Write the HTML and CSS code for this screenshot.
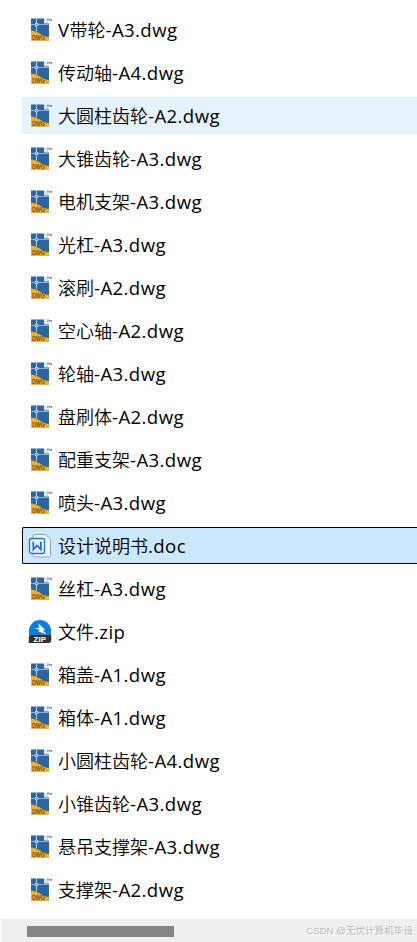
FILE: index.html
```
<!DOCTYPE html>
<html lang="zh-CN">
<head>
    <meta charset="UTF-8">
    <meta name="viewport" content="width=device-width, initial-scale=1.0">
    <title>文件列表</title>
    <link rel="stylesheet" href="styles.css">
</head>
<body>
    <!-- 图标定义 -->
    <svg class="icon-defs">
        <symbol id="icon-dwg" viewBox="0 0 24 24">
            <path fill="#2d65a3" d="M3 .5h13L21 5.500V23H3z"/>
            <path fill="#dfe8f4" d="M16 .5 21 5.500h-5z"/>
            <path fill="#f4b223" d="M3 12.500c4 .5 7 1.800 10 3.800 2.500 1.600 5 2.500 8 3V23H3z"/>
            <path fill="none" stroke="#b5cde6" d="M8.500.5V5M8.500 8v5.300"/>
            <path fill="none" stroke="#8fb0d3" d="M3 6.500h4M10 6.500h11"/>
            <circle cx="8.500" cy="6.500" r="1.500" fill="#4f83b9" stroke="#dcebfa"/>
            <text class="dwg-label" x="4" y="22" textLength="13" lengthAdjust="spacingAndGlyphs">DWG</text>
            <path fill="none" stroke="#5279ad" stroke-width=".8" d="M18.800 1h2.200M19.900 1v2M21.800 3V1l.9 1.200L23.600 1v2"/>
        </symbol>
        <symbol id="icon-doc" viewBox="0 0 24 24">
            <path fill="#f0f6ff" stroke="#8ea2c6" d="M6.500.5h11l5 4.500v16.500a1.500 1.500 0 0 1-1.500 1.500H6.500A1.500 1.500 0 0 1 5 21.500V2A1.500 1.500 0 0 1 6.500.5z"/>
            <rect x="1.500" y="4.500" width="15" height="15" rx="2" fill="#e8f3ff" stroke="#1a73ff" stroke-width="1.300"/>
            <path fill="none" stroke="#1a66ff" stroke-width="1.700" d="M4.300 8.500h1v7L9 11.500l3.800 4v-7h1"/>
        </symbol>
        <symbol id="icon-zip" viewBox="0 0 24 24">
            <path fill="#0a7de0" d="M1 15.500V11a11 11 0 0 1 22 0v4.500z"/>
            <path fill="#fff" d="M10.500 3.500 17 9.500l-2 .8 3.400 4.200-8.400-3.300 2-1.300-5.500-1.700 4.500-.5z"/>
            <path fill="#303237" d="M2.500 15h20.800v5a3 3 0 0 1-3 3H.8v-6A2 2 0 0 1 2.500 15z"/>
            <text class="zip-label" x="5.500" y="21.700" textLength="12.500" lengthAdjust="spacingAndGlyphs">ZIP</text>
        </symbol>
    </svg>

    <ul class="file-list">
        <li class="file"><svg class="icon"><use href="#icon-dwg"/></svg><span class="name"><i>V</i>带轮<i>-A3.dwg</i></span></li>
        <li class="file"><svg class="icon"><use href="#icon-dwg"/></svg><span class="name">传动轴<i>-A4.dwg</i></span></li>
        <li class="file hover"><svg class="icon"><use href="#icon-dwg"/></svg><span class="name">大圆柱齿轮<i>-A2.dwg</i></span></li>
        <li class="file"><svg class="icon"><use href="#icon-dwg"/></svg><span class="name">大锥齿轮<i>-A3.dwg</i></span></li>
        <li class="file"><svg class="icon"><use href="#icon-dwg"/></svg><span class="name">电机支架<i>-A3.dwg</i></span></li>
        <li class="file"><svg class="icon"><use href="#icon-dwg"/></svg><span class="name">光杠<i>-A3.dwg</i></span></li>
        <li class="file"><svg class="icon"><use href="#icon-dwg"/></svg><span class="name">滚刷<i>-A2.dwg</i></span></li>
        <li class="file"><svg class="icon"><use href="#icon-dwg"/></svg><span class="name">空心轴<i>-A2.dwg</i></span></li>
        <li class="file"><svg class="icon"><use href="#icon-dwg"/></svg><span class="name">轮轴<i>-A3.dwg</i></span></li>
        <li class="file"><svg class="icon"><use href="#icon-dwg"/></svg><span class="name">盘刷体<i>-A2.dwg</i></span></li>
        <li class="file"><svg class="icon"><use href="#icon-dwg"/></svg><span class="name">配重支架<i>-A3.dwg</i></span></li>
        <li class="file"><svg class="icon"><use href="#icon-dwg"/></svg><span class="name">喷头<i>-A3.dwg</i></span></li>
        <li class="file selected"><svg class="icon"><use href="#icon-doc"/></svg><span class="name">设计说明书<i>.doc</i></span></li>
        <li class="file"><svg class="icon"><use href="#icon-dwg"/></svg><span class="name">丝杠<i>-A3.dwg</i></span></li>
        <li class="file"><svg class="icon"><use href="#icon-zip"/></svg><span class="name">文件<i>.zip</i></span></li>
        <li class="file"><svg class="icon"><use href="#icon-dwg"/></svg><span class="name">箱盖<i>-A1.dwg</i></span></li>
        <li class="file"><svg class="icon"><use href="#icon-dwg"/></svg><span class="name">箱体<i>-A1.dwg</i></span></li>
        <li class="file"><svg class="icon"><use href="#icon-dwg"/></svg><span class="name">小圆柱齿轮<i>-A4.dwg</i></span></li>
        <li class="file"><svg class="icon"><use href="#icon-dwg"/></svg><span class="name">小锥齿轮<i>-A3.dwg</i></span></li>
        <li class="file"><svg class="icon"><use href="#icon-dwg"/></svg><span class="name">悬吊支撑架<i>-A3.dwg</i></span></li>
        <li class="file"><svg class="icon"><use href="#icon-dwg"/></svg><span class="name">支撑架<i>-A2.dwg</i></span></li>
    </ul>

    <div class="scrollbar">
        <div class="thumb"></div>
        <span class="watermark">CSDN @无忧计算机毕设</span>
    </div>
</body>
</html>
```
FILE: styles.css
```
* {
    box-sizing: border-box;
}
body {
    margin: 0;
    height: 942px;
    overflow: hidden;
    background: #fff;
    color: #000;
    font-family: "Open Sans", "Noto Sans CJK SC", sans-serif;
    display: flex;
    flex-direction: column;
}
.icon-defs {
    display: none;
}
.file-list {
    list-style: none;
    margin: 0;
    padding: 11px 0 0 22px;
    display: flex;
    flex-direction: column;
    gap: 6px;
}
.file {
    height: 37px;
    padding-left: 6px;
    display: flex;
    align-items: center;
    gap: 6px;
    border-radius: 2px 0 0 2px;
}
.file.hover {
    background: #e5f3ff;
}
.file.selected {
    background: #cce8ff;
    border: 1px solid #000;
    border-right: none;
    padding-left: 5px;
}
.icon {
    width: 24px;
    height: 24px;
    flex: none;
}
.name {
    font-family: "Noto Sans CJK SC", sans-serif;
    font-size: 18px;
    font-weight: 350;
    line-height: 35px;
    white-space: nowrap;
}
/* 西文部分单独使用更宽的字体 */
.name i {
    font-family: "Open Sans", sans-serif;
    font-size: 18.6px;
    font-style: normal;
    font-weight: 400;
    letter-spacing: 0.4px;
    line-height: 1;
}
.dwg-label {
    font: bold 6.5px "Liberation Sans", sans-serif;
    fill: #6b5530;
}
.zip-label {
    font: bold 7.5px "Liberation Sans", sans-serif;
    fill: #fff;
}
.scrollbar {
    margin: auto 0 0 1px;
    height: 23px;
    padding: 0 4px 0 26px;
    background: #efefef;
    display: flex;
    align-items: center;
    justify-content: space-between;
}
.thumb {
    width: 147px;
    height: 11px;
    margin-top: 1px;
    background: #868686;
}
.watermark {
    font-family: "Liberation Sans", "Noto Sans CJK SC", sans-serif;
    font-size: 9.6px;
    line-height: 14px;
    padding-top: 1px;
    color: #b9b9b9;
    text-shadow: 1px 1px 0 #fff;
    white-space: nowrap;
}
```
